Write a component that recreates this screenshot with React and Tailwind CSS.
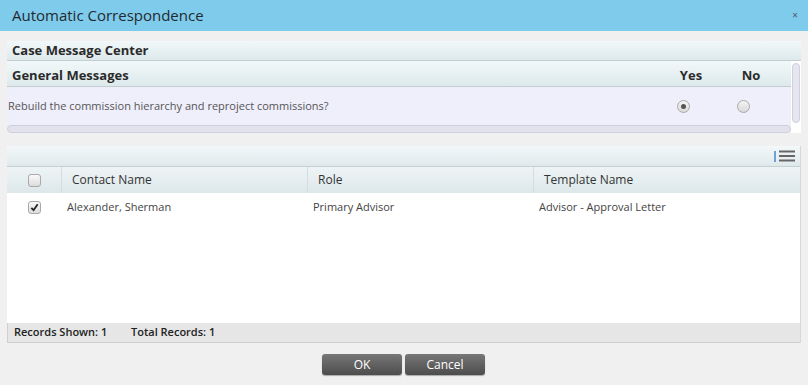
import React from "react";

const font = { fontFamily: '"Open Sans", "Noto Sans", sans-serif' };

function Radio({ checked }) {
  return (
    <span className="inline-flex h-[13px] w-[13px] items-center justify-center rounded-full border border-[#a9a9a9] bg-gradient-to-b from-[#f4f4f4] to-[#d9d9d9]">
      {checked && <span className="h-[5px] w-[5px] rounded-full bg-[#555]" />}
    </span>
  );
}

function Check({ checked }) {
  return (
    <span className="inline-flex h-[13px] w-[13px] items-center justify-center rounded-[3px] border border-[#a9a9a9] bg-gradient-to-b from-[#fafafa] to-[#dcdcdc]">
      {checked && (
        <svg width="9" height="9" viewBox="0 0 10 10">
          <path d="M1.5 5.5 L4 8 L8.5 1.5" fill="none" stroke="#222" strokeWidth="2" />
        </svg>
      )}
    </span>
  );
}

export default function App() {
  return (
    <div className="h-[385px] w-[808px] overflow-hidden bg-[#f0f0f0]" style={font}>
      {/* title bar */}
      <div className="flex h-[31px] items-center justify-between bg-[#7fcbeb] pl-3 pr-[10px]">
        <span className="text-[15px] text-[#1f2a30]">Automatic Correspondence</span>
        <span className="text-[10px] text-[#556]">×</span>
      </div>

      <div className="px-[7px] pt-[10px]">
        {/* case message center */}
        <div className="flex h-[20px] items-center border-b border-[#c4cdd0] bg-gradient-to-b from-[#f2f8f9] to-[#dde9eb] pl-[5px] text-[13px] font-bold text-[#2b2b2b]">
          Case Message Center
        </div>

        <div className="flex">
          <div className="flex-1 bg-[#efeefb]">
            <div className="flex h-[26px] items-center border-b border-[#c4cdd0] bg-gradient-to-b from-[#f2f8f9] to-[#dde9eb] pt-[5px] text-[13px] font-bold text-[#2b2b2b]">
              <span className="flex-1 pl-[5px]">General Messages</span>
              <span className="w-[60px] text-center">Yes</span>
              <span className="mr-[10px] w-[60px] text-center">No</span>
            </div>
            <div className="flex h-[38px] items-center text-[11px] text-[#555]">
              <span className="flex-1 pl-[1px]">Rebuild the commission hierarchy and reproject commissions?</span>
              <span className="flex w-[60px] justify-center"><Radio checked /></span>
              <span className="mr-[18px] flex w-[60px] justify-center"><Radio /></span>
            </div>
          </div>
          <div className="flex w-[10px] justify-center bg-white pt-[2px]">
            <div className="h-[60px] w-[8px] rounded-[4px] border border-[#cfd0dc] bg-[#e6e6f0]" />
          </div>
        </div>
        <div className="flex">
          <div className="h-[8px] flex-1 rounded-[4px] border border-[#cfd0dc] bg-[#e2e2ec]" />
          <div className="w-[10px] bg-white" />
        </div>

        {/* grid */}
        <div className="mt-[13px] border-r border-[#d8d8d8]">
          <div className="flex h-[21px] items-center justify-end border-b border-[#c6cfd2] bg-gradient-to-b from-[#f3f8f9] to-[#dfe9ec] pr-[5px]">
            <span className="mr-[3px] h-[11px] w-[2px] bg-[#6fa0dc]" />
            <svg width="16" height="12" viewBox="0 0 16 12">
              <rect x="0" y="0.5" width="16" height="2" fill="#666" />
              <rect x="0" y="5" width="16" height="2" fill="#666" />
              <rect x="0" y="9.5" width="16" height="2" fill="#666" />
            </svg>
          </div>
          <div className="flex h-[26px] items-center bg-gradient-to-b from-[#eef4f6] to-[#dde7ea] text-[12px] text-[#333]">
            <div className="flex h-full w-[55px] items-center justify-center border-r border-[#d4dcdf]"><Check /></div>
            <div className="flex h-full w-[246px] items-center border-r border-[#d4dcdf] pl-[10px]">Contact Name</div>
            <div className="flex h-full w-[226px] items-center border-r border-[#d4dcdf] pl-[10px]">Role</div>
            <div className="flex h-full flex-1 items-center pl-[10px]">Template Name</div>
          </div>
          <div className="h-[130px] bg-white text-[11px] text-[#444]">
            <div className="flex h-[28px] items-center">
              <div className="flex w-[55px] justify-center"><Check checked /></div>
              <div className="w-[246px] pl-[5px]">Alexander, Sherman</div>
              <div className="w-[226px] pl-[5px]">Primary Advisor</div>
              <div className="flex-1 pl-[5px]">Advisor - Approval Letter</div>
            </div>
          </div>
          <div className="flex h-[20px] items-center border-b border-l border-[#cfcfcf] bg-[#e6e6e6] pl-[6px] text-[11px] font-semibold text-[#222]">
            <span className="w-[117px]">Records Shown: 1</span>
            <span>Total Records: 1</span>
          </div>
        </div>

        {/* buttons */}
        <div className="mt-[11px] flex justify-center gap-[3px] pr-[1px]">
          <button className="h-[21px] w-[80px] rounded-[3px] bg-gradient-to-b from-[#777] to-[#4d4d4d] text-[12px] text-white shadow-[0_1px_1px_rgba(0,0,0,0.3)]">OK</button>
          <button className="h-[21px] w-[80px] rounded-[3px] bg-gradient-to-b from-[#777] to-[#4d4d4d] text-[12px] text-white shadow-[0_1px_1px_rgba(0,0,0,0.3)]">Cancel</button>
        </div>
      </div>
    </div>
  );
}
